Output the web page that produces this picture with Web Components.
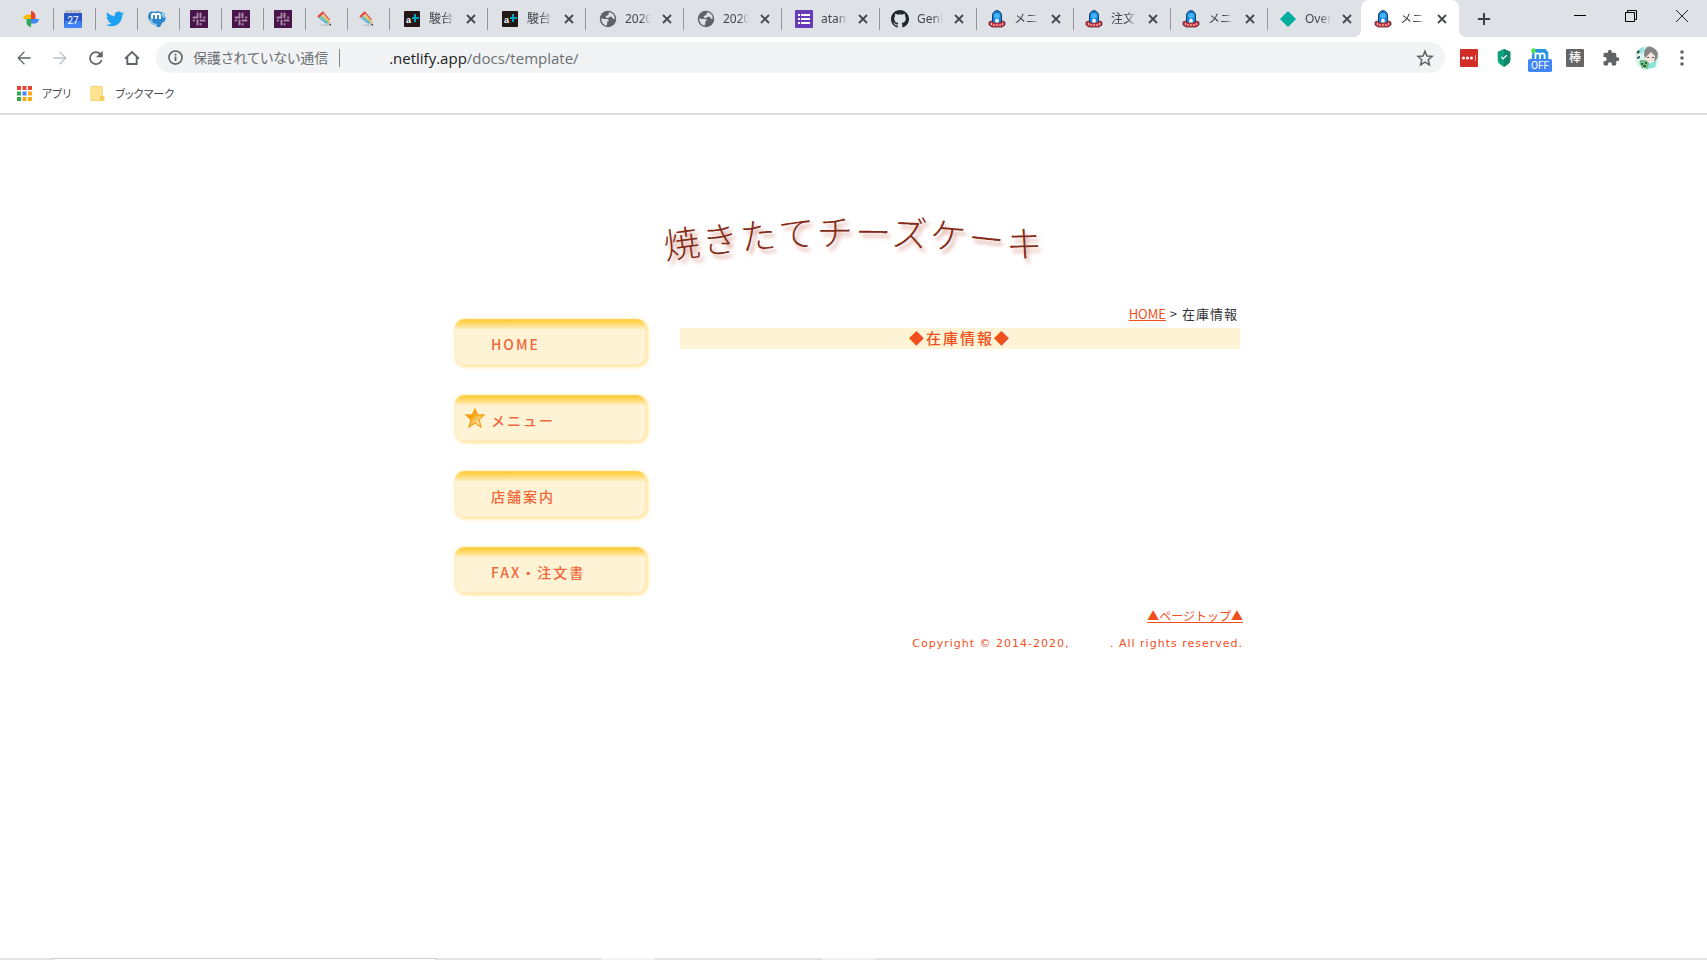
<!DOCTYPE html>
<html lang="ja">
<head>
<meta charset="utf-8">
<title>メニュー</title>
<style>
html, body { margin: 0; height: 100%; }
body { background: #fff; font-family: "Noto Sans", "Noto Sans CJK JP", sans-serif; }
</style>
</head>
<body>
<app-window></app-window>
<script>
const ICONS = {
photos: `<svg viewBox="0 0 24 24"><path fill="#ea4335" d="M12 1c4 1 6 4 6 6.500V12h-6z"/><path fill="#4285f4" d="M23 12c-1 4-4 6-6.500 6H12v-6z"/><path fill="#34a853" d="M12 23c-4-1-6-4-6-6.500V12h6z"/><path fill="#fbbc04" d="M1 12c1-4 4-6 6.500-6H12v6z"/></svg>`,
calendar: `<svg viewBox="0 0 18 18"><path fill="#c7c9cc" d="M1 0h16v4H1z"/><path fill="#8e9094" d="M3 1h1v1H3zm4 0h1v1H7zm4 0h1v1h-1zm4 0h1v1h-1z"/><path fill="#2a56c6" d="M0 3h18v13H0z"/><path fill="#4285f4" d="M1 11h16l1 7H0z"/><text x="9" y="14" text-anchor="middle" font-size="10" font-family="Roboto" fill="#fff">27</text></svg>`,
twitter: `<svg viewBox="0 0 24 24"><path fill="#1da1f2" d="M23.950 4.570a10 10 0 0 1-2.820.77 4.960 4.960 0 0 0 2.160-2.720c-.95.55-2 .95-3.130 1.180a4.920 4.920 0 0 0-8.380 4.480C7.690 8.100 4.070 6.130 1.640 3.160a4.820 4.820 0 0 0-.67 2.480c0 1.710.87 3.210 2.190 4.100a4.900 4.900 0 0 1-2.230-.62v.06a4.920 4.920 0 0 0 3.950 4.830 5 5 0 0 1-2.210.08 4.940 4.940 0 0 0 4.600 3.420A9.870 9.870 0 0 1 0 19.540 13.990 13.990 0 0 0 7.550 21.750c9.050 0 14-7.500 14-13.980 0-.21 0-.42-.02-.63a9.940 9.940 0 0 0 2.420-2.570z"/></svg>`,
mouse: `<svg viewBox="0 0 18 18"><path fill="#2b88d0" d="M1 3l3-2 2 1 3-1 4 1 3 1 1 3-1 2 2-1-1 4-3 2-2 4-3 0-2-2-3-1-3-4-1-3z"/><path fill="#8ec7ef" d="M1 9l3 1 1 3 4 1v2l-5-2zM13 3l4 0v3l-2 2z"/><path fill="none" stroke="#fff" stroke-width="2" d="M4 9V4m0 2c0-3 4-3 4 0v3m0-3c0-3 4-3 4 0v3"/></svg>`,
slack: `<svg viewBox="0 0 18 18"><path fill="#4a154b" d="M0 0h18v18H0z"/><g stroke="#a98aa9" stroke-width="2" stroke-linecap="round"><path d="M7.500 6v-.5M3.500 7.500h4M10.500 3.500v4M14 7.500h.4M10.500 10.500h4M10.500 14v.4M7.500 10.500v4M3.600 10.500h.4M7.500 3.600V4"/></g></svg>`,
pencil: `<svg viewBox="0 0 18 18"><path fill="#c6c6c6" d="M3 15l9-1 3 2H6z"/><g stroke-width="1.300"><path stroke="#e2574c" d="M7.500 3l6 7"/><path stroke="#f4c44d" d="M6 4.500l7 7"/><path stroke="#55bf7f" d="M4.500 6l8 7"/><path stroke="#4aa8e0" d="M3 7.500l8 6"/></g><path stroke="#e93d35" stroke-width="2" d="M2 7l5.500-5"/><path fill="#ddb68b" d="M12 14l2-3 1 4z"/><path fill="#333" d="M13 14l2 0v2z"/></svg>`,
aplus: `<svg viewBox="0 0 18 18"><rect x="1" y="1" width="16" height="16" rx="1" fill="#231815"/><text x="3" y="13" font-family="Liberation Sans" font-weight="bold" font-size="9" fill="#fff">a</text><path stroke="#00a5bd" stroke-width="2" d="M9 8h7M12 4v8"/></svg>`,
globe: `<svg viewBox="0 0 24 24"><circle cx="12" cy="12" r="11" fill="#5f6368"/><path fill="#dee1e6" d="M3 11l4 1h4c1 0 2 1 2 3h-2v3l-1 3C6 20 3 16 3 11zM13 3c5 0 8 4 8 9h-2l-2-3h-3l-2 2-3-1V8l3-1 1-2z"/></svg>`,
forms: `<svg viewBox="0 0 18 18"><rect width="18" height="18" rx="1" fill="#673ab7"/><path stroke="#fff" stroke-width="2" d="M3 5h2m1 0h9M3 9h2m1 0h9M3 13h2m1 0h9"/></svg>`,
github: `<svg viewBox="0 0 16 16"><path fill="#24292e" fill-rule="evenodd" d="M8 0C3.580 0 0 3.580 0 8c0 3.540 2.290 6.530 5.470 7.590.4.070.55-.17.55-.38 0-.19-.01-.82-.01-1.490-2.010.37-2.530-.49-2.690-.94-.09-.23-.48-.94-.82-1.130-.28-.15-.68-.52-.01-.53.63-.01 1.080.58 1.230.82.72 1.210 1.870.87 2.330.66.070-.52.28-.87.51-1.070-1.780-.2-3.640-.89-3.640-3.950 0-.87.31-1.590.82-2.150-.08-.2-.36-1.020.08-2.120 0 0 .67-.21 2.200.82a7.600 7.600 0 0 1 4 0c1.530-1.040 2.200-.82 2.200-.82.44 1.100.16 1.920.08 2.120.51.56.82 1.270.82 2.150 0 3.070-1.870 3.750-3.650 3.950.29.25.54.73.54 1.480 0 1.070-.01 1.930-.01 2.200 0 .21.15.46.55.38A8 8 0 0 0 8 0z"/></svg>`,
mascot: `<svg viewBox="0 0 18 18"><path fill="#1689de" stroke="#163b70" stroke-width="1" d="M4.500 14V6c0-3 1.500-4.500 3-5h3c1.500.5 3 2 3 5v8z"/><circle cx="9" cy="1.500" r="1.300" fill="#1689de" stroke="#163b70" stroke-width=".6"/><path fill="#fff" d="M7.300 13V9.500L9 8.500l1.700 1V13z"/><path fill="#45b2fa" d="M6 6c0-4 6-4 6 0l-1 2H7z"/><path fill="#d7353c" stroke="#4b2a39" stroke-width=".8" d="M1 12l2.500-1L6 13h6l2.500-2 2.500 1v3l-3 2H4l-3-2z"/><path stroke="#f4d7d3" d="M3.500 13v2m2.500-1v2m3-2v2m3-2v2m2.500-3v2"/></svg>`,
diamond: `<svg viewBox="0 0 18 18"><path fill="#00ad9f" d="M9 1l8 8-8 8-8-8z"/></svg>`,
back: `<svg viewBox="0 0 24 24"><path fill="#5f6368" d="M22 11H5.800l7.500-7.500L12 2 2 12l10 10 1.300-1.400L5.800 13H22z"/></svg>`,
forward: `<svg viewBox="0 0 24 24"><path fill="#bdc1c6" d="M2 11h16.200l-7.500-7.500L12 2l10 10-10 10-1.300-1.400 7.500-7.600H2z"/></svg>`,
reload: `<svg viewBox="0 0 24 24"><path fill="none" stroke="#5f6368" stroke-width="2.600" d="M19 6.500A9 9 0 1 0 20.500 15"/><path fill="#5f6368" d="M22 1v10H12z"/></svg>`,
home: `<svg viewBox="0 0 24 24"><path fill="none" stroke="#5f6368" stroke-width="2.800" d="M1.500 13L12 3l10.500 10M5 11v10h14V11"/></svg>`,
info: `<svg viewBox="0 0 24 24"><circle cx="12" cy="12" r="10.500" fill="none" stroke="#5f6368" stroke-width="2.600"/><path stroke="#5f6368" stroke-width="2.800" d="M12 10.500v7M12 6v2.800"/></svg>`,
apps: `<svg viewBox="0 0 15 15"><path fill="#ea4335" d="M0 0h4v4H0zm11 0h4v4h-4zM5.500 0h4v4h-4z"/><path fill="#34a853" d="M0 5.500h4v4H0zM0 11h4v4H0z"/><path fill="#4285f4" d="M5.500 5.500h4v4h-4z"/><path fill="#fbaa1b" d="M11 5.500h4v4h-4zM11 11h4v4h-4zM5.500 11h4v4h-4z"/></svg>`,
folder: `<svg viewBox="0 0 16 16"><path fill="#ffe391" stroke="#f5d36e" d="M1 .5h12v11h2v4H1z"/><path fill="#f7c94c" d="M11 11h3l1 2-2 3h-2z"/></svg>`,
star: `<svg viewBox="0 0 24 24"><path fill="none" stroke="#5f6368" stroke-width="2" d="M12 3l2.600 6.300 6.900.6-5.200 4.500 1.600 6.700L12 17.500l-5.900 3.600 1.600-6.700-5.200-4.500 6.900-.6z"/></svg>`,
pass: `<svg viewBox="0 0 18 18"><rect width="18" height="18" rx="1" fill="#d32d27"/><g fill="#fff"><circle cx="3.500" cy="9" r="1.500"/><circle cx="7.500" cy="9" r="1.500"/><circle cx="11.500" cy="9" r="1.500"/><path fill="#f0a5a2" d="M15 6h1v6h-1z"/></g></svg>`,
shield: `<svg viewBox="0 0 18 20"><path fill="#0e9f7b" d="M9 0l7 3v9c0 4-4 6-7 8-3-2-7-4-7-8V3z"/><path fill="#10876b" d="M9 0l7 3v9c0 4-4 6-7 8z"/><path fill="none" stroke="#fff" stroke-width="1.500" d="M6 9l2 2 4-4"/></svg>`,
off: `<svg viewBox="0 0 26 26"><path fill="#2795e0" d="M5 1h14l3 4v8H4z"/><circle cx="6" cy="3" r="2.600" fill="#4ee34a"/><path fill="none" stroke="#fff" stroke-width="2" d="M8 12V5m0 3c0-3 5-3 5 0v4m0-4c0-3 5-3 5 0v4"/><rect y="12" width="26" height="14" rx="2" fill="#4285f4"/><text x="13" y="23" text-anchor="middle" font-size="11" font-family="Roboto" fill="#fff">OFF</text></svg>`,
bo: `<svg viewBox="0 0 18 18"><rect width="18" height="18" rx="1" fill="#666"/><text x="9" y="13" text-anchor="middle" font-size="12" font-family="Noto Sans CJK JP" font-weight="500" fill="#fff">棒</text></svg>`,
puzzle: `<svg viewBox="0 0 24 24"><path fill="#5f6368" d="M20.500 11H19V7a2 2 0 0 0-2-2h-4V3.500a2.500 2.500 0 0 0-5 0V5H4a2 2 0 0 0-2 2v3.800h1.500a2.700 2.700 0 0 1 0 5.400H2V20a2 2 0 0 0 2 2h3.800v-1.500a2.700 2.700 0 0 1 5.400 0V22H17a2 2 0 0 0 2-2v-4h1.500a2.500 2.500 0 0 0 0-5z"/></svg>`,
avatar: `<svg viewBox="0 0 24 24"><defs><clipPath id="c"><circle cx="12" cy="12" r="12"/></clipPath></defs><g clip-path="url(#c)"><path fill="#d9f5ee" d="M0 0h24v24H0z"/><path fill="#8fe3dc" d="M4 3l4-2 2 3-4 4zM13 18l8-3v7h-8z"/><path fill="#35584c" d="M1 6l3-2 1 2-2 2zM2 11l3-1v2l-3 1zM5 15l2-1 1 2-2 1zM10 17l3-1v2l-2 1z"/><path fill="#75bd80" d="M4 16l7-3 3 4-1 6-6-1z"/><path fill="#2c6b48" d="M6 17l2 0v2H6zm4-1h2v2h-2zm-2 3h3v2H8z"/><path fill="#f8e5dc" d="M10 6h9l1 7-4 4-6-3z"/><path fill="#858583" d="M9 9c0-6 3-9 7-9 7 0 8 7 6 13l-3 3 1-6-4-4-4 4-2 2z"/><path fill="#504b4b" d="M12 11h2v1h-2zm5 0h2v1h-2z"/></g></svg>`,
more: `<svg viewBox="0 0 18 18"><g fill="#5f6368"><circle cx="9" cy="3" r="1.800"/><circle cx="9" cy="9" r="1.800"/><circle cx="9" cy="15" r="1.800"/></g></svg>`,
close: `<svg viewBox="0 0 12 12"><path stroke="#45484b" stroke-width="1.800" d="M2 2l8 8M10 2l-8 8"/></svg>`,
plus: `<svg viewBox="0 0 14 14"><path stroke="#3c4043" stroke-width="2" d="M7 1v12M1 7h12"/></svg>`,
min: `<svg viewBox="0 0 12 12"><path fill="#000" d="M0 5h12v1H0z"/></svg>`,
max: `<svg viewBox="0 0 12 12"><path fill="none" stroke="#000" d="M.5 2.500h9v9h-9zM2.500 2V.5h9v9H10"/></svg>`,
exit: `<svg viewBox="0 0 12 12"><path stroke="#222" d="M0 0l12 12M12 0L0 12"/></svg>`,
navstar: `<svg viewBox="0 0 20 20"><defs><linearGradient id="g" x1="0" y1="0" x2="1" y2="1"><stop offset=".35" stop-color="#f49b00"/><stop offset=".8" stop-color="#fff0c4"/></linearGradient></defs><path fill="url(#g)" stroke="#f2a51d" stroke-width="1.300" d="M10 1l2.700 6H19l-5 4.500 2 7.500-6-4-6 4 2-7.500L1 7h6.300z"/></svg>`
};

function define(name, css, html) {
  customElements.define(name, class extends HTMLElement {
    connectedCallback() {
      if (this.shadowRoot) return;
      const root = this.attachShadow({ mode: 'open' });
      root.innerHTML = `<style>*{box-sizing:border-box}${css}</style>${typeof html === 'function' ? html(this) : html}`;
    }
  });
}

define('ui-icon',
  `:host{display:block;flex:none;width:18px;height:18px} svg{display:block;width:100%;height:100%}`,
  el => ICONS[el.getAttribute('name')].replace('<svg', '<svg aria-hidden="true"'));

define('browser-tab', `
  :host{display:block;flex:none;width:98px;height:37px;position:relative}
  :host([pinned]){width:42px}
  :host([narrow]){width:97px}
  .tab{display:flex;align-items:center;height:100%;padding-left:13px}
  :host([narrow]) .tab{padding-left:11px}
  :host([pinned]) .tab{padding-left:10px}
  .tab::after{content:"";position:absolute;right:0;top:8px;width:1px;height:22px;background:#919498}
  :host([last]) .tab::after,:host([active]) .tab::after{display:none}
  :host([active]){margin-left:-4px}
  :host([active]) .tab{background:#fff;border-radius:8px 8px 0 0}
  :host([active])::before,:host([active])::after{content:"";position:absolute;bottom:0;width:8px;height:8px}
  :host([active])::before{left:-8px;background:radial-gradient(circle at 0 0,#dee1e6 8px,#fff 8px)}
  :host([active])::after{right:-8px;background:radial-gradient(circle at 100% 0,#dee1e6 8px,#fff 8px)}
  .title{flex:none;width:26px;margin-left:8px;overflow:hidden;white-space:nowrap;font-size:12px;line-height:20px;color:#45484b;-webkit-mask-image:linear-gradient(90deg,#000 60%,transparent);mask-image:linear-gradient(90deg,#000 60%,transparent)}
  button{border:0;padding:2px;background:none;margin-left:8px;width:16px;height:16px}
  button ui-icon{width:12px;height:12px}`,
  el => `<div class="tab"><ui-icon name="${el.getAttribute('icon')}"></ui-icon>${el.hasAttribute('pinned') ? '' : '<span class="title"><slot></slot></span><button aria-label="閉じる"><ui-icon name="close"></ui-icon></button>'}</div>`);

define('tab-strip', `
  :host{display:flex;height:37px;background:#dee1e6;padding-left:12px}
  button{border:0;background:none;padding:0;flex:none}
  .new{width:14px;height:14px;margin:12px 0 0 18px}
  .new ui-icon{width:14px;height:14px}
  .win{margin-left:auto;display:flex;height:32px}
  .win button{display:grid;place-items:center;width:51px}
  .win ui-icon{width:12px;height:12px}`,
  `${['photos','calendar','twitter','mouse','slack','slack','slack','pencil','pencil'].map(i => `<browser-tab pinned icon="${i}"></browser-tab>`).join('')}
  <browser-tab icon="aplus">駿台</browser-tab><browser-tab icon="aplus">駿台</browser-tab>
  <browser-tab icon="globe">2020</browser-tab><browser-tab icon="globe">2020</browser-tab>
  <browser-tab icon="forms">atam</browser-tab>
  <browser-tab narrow icon="github">Genk</browser-tab>
  <browser-tab narrow icon="mascot">メニュ</browser-tab><browser-tab narrow icon="mascot">注文</browser-tab>
  <browser-tab narrow icon="mascot">メニュ</browser-tab><browser-tab narrow last icon="diamond">Over</browser-tab>
  <browser-tab active icon="mascot">メニュ</browser-tab>
  <button class="new" aria-label="新しいタブ"><ui-icon name="plus"></ui-icon></button>
  <div class="win"><button aria-label="最小化"><ui-icon name="min"></ui-icon></button><button aria-label="元に戻す"><ui-icon name="max"></ui-icon></button><button aria-label="閉じる"><ui-icon name="exit"></ui-icon></button></div>`);

define('tool-bar', `
  :host{display:flex;align-items:center;height:41px;padding:0 7px 0 16px;background:#fff}
  button{border:0;background:none;padding:0;flex:none}
  .nav{display:flex;gap:20px;margin-right:16px}
  .nav ui-icon{width:16px;height:16px}
  .address{flex:1;display:flex;align-items:center;height:31px;border-radius:16px;background:#f1f3f4;padding:0 11px 0 12px;font:15px/22px "Open Sans","Noto Sans CJK JP",sans-serif;color:#6b6f73}
  .address ui-icon{width:15px;height:15px}
  .safe{margin-left:10px;font-size:14px;white-space:nowrap;font-feature-settings:"palt"}
  .bar{width:1px;height:18px;background:#888;margin:0 49px 0 11px}
  .url{flex:1;white-space:nowrap}
  b{font-weight:400;color:#202124}
  .address button ui-icon{width:18px;height:18px}
  .ext{display:grid;grid-template-columns:repeat(7,1fr);place-items:center;width:249px;margin-left:6px}
  .off{margin-top:4px}
  .ext button.off ui-icon{width:24px;height:26px}
  .ext button.avatar ui-icon{width:24px;height:24px}`,
  `<div class="nav"><button aria-label="戻る"><ui-icon name="back"></ui-icon></button><button aria-label="進む"><ui-icon name="forward"></ui-icon></button><button aria-label="再読み込み"><ui-icon name="reload"></ui-icon></button><button aria-label="ホーム"><ui-icon name="home"></ui-icon></button></div>
  <div class="address"><ui-icon name="info"></ui-icon><span class="safe">保護されていない通信</span><span class="bar"></span><span class="url"><b>.netlify.app</b>/docs/template/</span><button aria-label="ブックマークに追加"><ui-icon name="star"></ui-icon></button></div>
  <div class="ext">${['pass','shield','off','bo','puzzle','avatar','more'].map(i => `<button class="${i}" aria-label="${i}"><ui-icon name="${i}"></ui-icon></button>`).join('')}</div>`);

define('bookmark-bar', `
  :host{display:flex;align-items:center;box-sizing:border-box;height:37px;padding:0 0 4px 17px;border-bottom:2px solid #d8dadd;background:#fff}
  button{display:flex;align-items:center;border:0;background:none;padding:0;font:11px/20px "Noto Sans","Noto Sans CJK JP",sans-serif;font-feature-settings:"palt";color:#45484b;margin-right:19px}
  ui-icon{width:15px;height:15px;margin-right:10px}`,
  `<button><ui-icon name="apps"></ui-icon>アプリ</button><button><ui-icon name="folder"></ui-icon>ブックマーク</button>`);

define('arched-title', `
  :host{display:block}
  h1{margin:0;display:flex;justify-content:center;font:300 36px/48px "Noto Sans CJK JP",sans-serif;text-shadow:3px 4px 4px #d99c8f}
  svg{display:block;width:400px;height:80px;overflow:visible}`,
  `<h1><svg viewBox="0 0 400 80"><path id="arc" fill="none" d="M10 55Q200 26 390 55"/><text fill="#832b16" font-size="36" letter-spacing="2"><textPath href="#arc" startOffset="50%" text-anchor="middle">焼きたてチーズケーキ</textPath></text></svg></h1>`);

define('menu-button', `
  :host{display:block}
  a{display:flex;align-items:center;height:46px;padding:4px 0 0 10px;border-radius:9px;text-decoration:none;color:#f0673a;font:500 14px/20px "Noto Sans CJK JP",sans-serif;letter-spacing:2px;background:linear-gradient(#ffca2d,#ffd65c 4px,#fff3d6 11px);box-shadow:1px 1px 4px #ffd85f,inset 0 0 2px #ffdca0}
  .mark{width:20px;height:20px;margin:-4px 6px 0 0}
  ui-icon{width:20px;height:20px}`,
  el => `<a href="#"><span class="mark">${el.hasAttribute('starred') ? '<ui-icon name="navstar"></ui-icon>' : ''}</span><slot></slot></a>`);

define('side-menu', `
  :host{display:flex;flex-direction:column;gap:30px;width:191px;flex:none}`,
  `<menu-button>HOME</menu-button><menu-button starred>メニュー</menu-button><menu-button>店舗案内</menu-button><menu-button>FAX・注文書</menu-button>`);

define('stock-page', `
  :host{display:block;box-sizing:border-box;max-width:797px;margin:0 auto;padding-right:9px;color:#f04e1a}
  a{color:#f04e1a}
  header{padding-top:90px;height:190px;margin-right:-9px}
  .body{display:flex;gap:34px;padding-right:3px}
  side-menu{padding-top:14px}
  main{flex:1;min-width:0}
  nav{padding-right:2px;text-align:right;font:13px/18px "Noto Sans CJK JP",sans-serif;letter-spacing:1px;color:#333;height:23px}
  nav a{letter-spacing:0}
  h2{margin:0;padding-bottom:2px;background:#fff3d6;text-align:center;font:500 15px/19px "Noto Sans CJK JP",sans-serif;letter-spacing:2px}
  footer{text-align:right;margin-top:11px}
  footer a{font:12px/20px "Noto Sans CJK JP",sans-serif}
  p{margin:8px 0 0;font:11px/20px "DejaVu Sans",sans-serif;letter-spacing:1px}
  .name{display:inline-block;width:36px}`,
  `<header><arched-title></arched-title></header>
  <div class="body"><side-menu></side-menu><main><nav><a href="#">HOME</a> &gt; 在庫情報</nav><h2>◆在庫情報◆</h2></main></div>
  <footer><a href="#">▲ページトップ▲</a><p>Copyright © 2014-2020, <span class="name"></span>. All rights reserved.</p></footer>`);

define('task-edge', `
  :host{display:flex;height:2px;background:#e3e3e3}
  i{height:2px}
  .search{margin-left:53px;width:383px;background:#fff;border:1px solid #d0d0d0;border-bottom:0}
  .a{margin-left:165px;width:54px;background:#f4f4f4}
  .b{margin-left:167px;width:54px;background:#f0f0f0}`,
  `<i class="search"></i><i class="a"></i><i class="b"></i>`);

define('app-window', `
  :host{display:flex;flex-direction:column;min-height:100%}
  stock-page{flex:1;width:100%}`,
  `<tab-strip></tab-strip><tool-bar></tool-bar><bookmark-bar></bookmark-bar><stock-page></stock-page><task-edge></task-edge>`);
</script>
</body>
</html>
